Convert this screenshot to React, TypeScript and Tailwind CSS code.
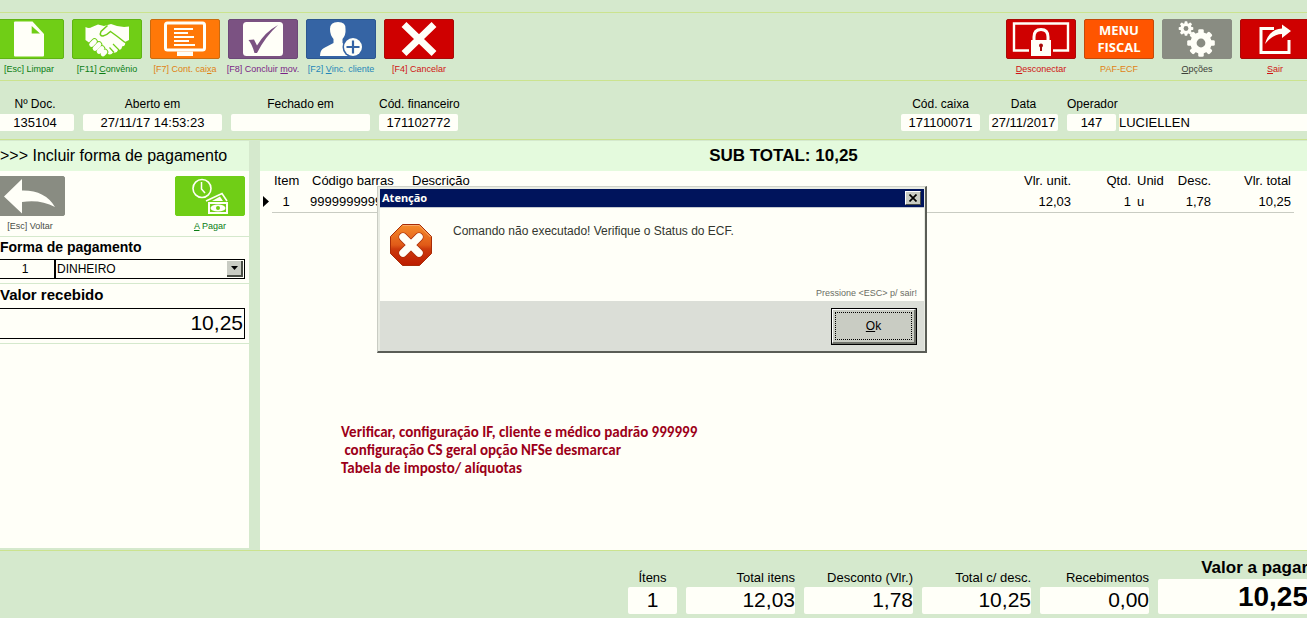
import React from "react";

function Tool({
  label,
  hotkey = "",
  rest = "",
  box,
  text,
  children,
}: {
  label: string;
  hotkey?: string;
  rest?: string;
  box: string;
  text: string;
  children: React.ReactNode;
}) {
  return (
    <button type="button" className="flex w-[70px] shrink-0 flex-col items-center gap-1">
      <span className={`flex h-10 w-[70px] items-center justify-center rounded-xs border ${box}`}>{children}</span>
      <span className={`text-[9px] leading-3 whitespace-nowrap ${text}`}>
        {label}
        <u>{hotkey}</u>
        {rest}
      </span>
    </button>
  );
}

function Icon({ children }: { children: React.ReactNode }) {
  return (
    <svg viewBox="0 0 70 40" className="h-10 w-[70px] shrink-0" fill="#fffff8" aria-hidden="true">
      {children}
    </svg>
  );
}

function Gear({ cx, cy, r, hole }: { cx: number; cy: number; r: number; hole: number }) {
  return (
    <g transform={`translate(${cx} ${cy})`}>
      {[0, 45, 90, 135].map((a) => (
        <rect key={a} x={-r * 0.2} y={-r} width={r * 0.4} height={r * 2} rx={r * 0.1} transform={`rotate(${a})`} />
      ))}
      <circle r={r * 0.77} />
      <circle r={hole} fill="#898c82" />
    </g>
  );
}

function Field({
  id,
  label,
  value,
  width,
  align = "text-center",
}: {
  id: string;
  label: string;
  value: string;
  width: string;
  align?: string;
}) {
  return (
    <div className={`flex shrink-0 flex-col gap-[3px] ${width}`}>
      <label htmlFor={id} className={`text-xs leading-[14px] whitespace-nowrap ${align}`}>
        {label}
      </label>
      <input id={id} readOnly value={value} className="h-[17px] w-full rounded-xs bg-[#fffff8] text-center text-[13px] outline-none" />
    </div>
  );
}

function Total({ id, label, value, width, center }: { id: string; label: string; value: string; width: string; center?: boolean }) {
  return (
    <div className={`flex shrink-0 flex-col ${width} ${center ? "text-center" : "text-right"}`}>
      <label htmlFor={id} className="text-[13px] leading-[18px] whitespace-nowrap">
        {label}
      </label>
      <input
        id={id}
        readOnly
        value={value}
        className={`h-[27px] w-full rounded-xs bg-[#fffff8] pb-0.5 text-[21px] outline-none ${center ? "text-center" : "text-right"}`}
      />
    </div>
  );
}

function Toolbar() {
  return (
    <nav className="mt-3 -mr-[3px] -ml-1.5 flex h-[69px] justify-between border-y border-[#cbe38f] pt-1.5">
      <div className="flex gap-2">
        <Tool label="[Esc] Limpar" box="border-[#5fb414] bg-[#70ce16]" text="text-[#0a7d14]">
          <Icon>
            <path d="M20 3.5Q20 2.5 21 2.5H38.5L50 15V36.5Q50 37.5 49 37.5H21Q20 37.5 20 36.5Z" />
            <path d="M37.7 7V14.5H46Z" fill="#70ce16" />
          </Icon>
        </Tool>
        <Tool label="[F11] " hotkey="C" rest="onvênio" box="border-[#5fb414] bg-[#70ce16]" text="text-[#0a7d14]">
          <Icon>
            <path d="M13.5 8Q17 10 20 8L26 5.500L32 7L39 5Q48 9 57 7.500V21L53 23Q54 27 50 27.500Q50 31 46 31Q45 34.500 41 33.500Q39 37 35 34.500L28 28L19 25L13.500 21Z" />
            <path d="M35.500 6.500L29 12.500Q27 17 31 17Q35 16 38.500 12.500Q45 17 53 23.500" fill="none" stroke="#70ce16" strokeWidth="1.500" />
            <path d="M41 25L47 31M37.500 28.500L42 33.500" stroke="#70ce16" strokeWidth="1.200" />
            <path d="M19.500 25.500L22.500 22.500M23 29.500L27 25.500M27 32.500L30 29.500M31 35L33 33" stroke="#70ce16" strokeWidth="6.600" strokeLinecap="round" />
            <path d="M19.500 25.500L22.500 22.500M23 29.500L27 25.500M27 32.500L30 29.500M31 35L33 33" stroke="#fffff8" strokeWidth="4.600" strokeLinecap="round" />
          </Icon>
        </Tool>
        <Tool label="[F7] Cont. cai" hotkey="x" rest="a" box="border-[#c96b10] bg-[#ff7808]" text="text-[#e08214]">
          <Icon>
            <rect x="15.5" y="4" width="39" height="27" rx="2" fill="none" stroke="#fffff8" strokeWidth="3" />
            <path d="M27 32.5H43V37H27Z" />
            <path d="M24 10H43M24 14H38M24 18H44M24 22H39M24 26H45" stroke="#fffff8" strokeWidth="2" />
          </Icon>
        </Tool>
        <Tool label="[F8] Concluir " hotkey="m" rest="ov." box="border-[#6c4878] bg-[#7b5282]" text="text-[#7a1f86]">
          <Icon>
            <rect x="15" y="3" width="40" height="34" rx="3.5" />
            <path d="M20.5 21L26 20.5L29 26.5Q37 13 50 6Q37 18 29 34H26.5Q24 25 20.5 21Z" fill="#7b5282" />
          </Icon>
        </Tool>
        <Tool label="[F2] " hotkey="V" rest="inc. cliente" box="border-[#2c5790] bg-[#3564a4]" text="text-[#2586b8]">
          <Icon>
            <path d="M24 10Q24 3 32 3Q40 3 39.500 10Q40 16 36.500 20V24Q39 27 44 28V37H14Q14 31 18 29L27.500 24V20Q24 16 24 10Z" />
            <circle cx="47" cy="28" r="10.5" fill="#3564a4" />
            <circle cx="47" cy="28" r="9" />
            <path d="M40.5 28H53.5M47 21.5V34.5" stroke="#3564a4" strokeWidth="2.2" />
          </Icon>
        </Tool>
        <Tool label="[F4] Cancelar" box="border-[#a80a08] bg-[#cf0000]" text="text-[#d01414]">
          <Icon>
            <path d="M20 5.5L50 34.5M50 5.5L20 34.5" stroke="#fffff8" strokeWidth="7" />
          </Icon>
        </Tool>
      </div>
      <div className="flex gap-2">
        <Tool label="" hotkey="D" rest="esconectar" box="border-[#a80a08] bg-[#cf0000]" text="text-[#d01414]">
          <Icon>
            <path d="M23 31.5H8V4.5H62V31.5H47" fill="none" stroke="#fffff8" strokeWidth="2.4" />
            <path d="M28 22V18Q28 10.5 35 10.5T42 18V22" fill="none" stroke="#fffff8" strokeWidth="3" />
            <rect x="25" y="21" width="20" height="16" />
            <circle cx="35" cy="26.5" r="2" fill="#a80a08" />
            <path d="M34 27H36V32H34Z" fill="#a80a08" />
          </Icon>
        </Tool>
        <Tool label="PAF-ECF" box="border-[#c24a0c] bg-[#ff5500]" text="text-[#e08214]">
          <span className="font-['Open_Sans',sans-serif] text-[13px] leading-[17px] font-bold text-[#fffff8]">
            MENU
            <br />
            FISCAL
          </span>
        </Tool>
        <Tool label="" hotkey="O" rest="pções" box="border-[#898c82] bg-[#898c82]" text="text-[#3c4038]">
          <Icon>
            <Gear cx={24} cy={9.5} r={7.3} hole={2.4} />
            <Gear cx={39} cy={24} r={13.8} hole={4.4} />
          </Icon>
        </Tool>
        <Tool label="" hotkey="S" rest="air" box="border-[#a80a08] bg-[#cf0000]" text="text-[#d01414]">
          <Icon>
            <path d="M34 9.500H21V33.500H49V21" fill="none" stroke="#fffff8" strokeWidth="3" />
            <path d="M25 25Q29 10 42 9.500V5.500L51 12L42 19V15Q33 15 25 25Z" />
          </Icon>
        </Tool>
      </div>
    </nav>
  );
}

function HeaderFields() {
  return (
    <div className="flex h-[59px] justify-between overflow-hidden border-b border-[#cbe38f] pt-4">
      <div className="-ml-1 flex gap-[9px]">
        <Field id="doc" label="Nº Doc." value="135104" width="w-[78px]" />
        <Field id="aberto" label="Aberto em" value="27/11/17 14:53:23" width="w-[139px]" />
        <Field id="fechado" label="Fechado em" value="" width="w-[139px]" />
        <Field id="financeiro" label="Cód. financeiro" value="171102772" width="w-[79px]" align="text-left" />
      </div>
      <div className="flex gap-[9px]">
        <Field id="caixa" label="Cód. caixa" value="171100071" width="w-[79px]" />
        <Field id="data" label="Data" value="27/11/2017" width="w-[69px]" />
        <div className="flex items-start gap-[3px]">
          <Field id="operador" label="Operador" value="147" width="w-[49px]" align="text-left" />
          <input
            aria-label="Nome do operador"
            readOnly
            value="LUCIELLEN"
            className="mt-[17px] h-[17px] w-[188px] bg-[#fffff8] text-[13px] outline-none"
          />
        </div>
      </div>
    </div>
  );
}

function PaymentPanel() {
  return (
    <aside className="mb-0.5 flex w-[249px] shrink-0 flex-col bg-[#fffff8]">
      <h2 className="h-[30px] bg-[#e4fadd] text-base leading-[30px] whitespace-nowrap">&gt;&gt;&gt; Incluir forma de pagamento</h2>
      <div className="-ml-[5px] flex h-[66px] justify-between border-b border-[#d5e9cd] pt-[5px] pr-1">
        <Tool label="[Esc] Voltar" box="border-[#898c82] bg-[#898c82]" text="text-[#4a4e46]">
          <Icon>
            <path d="M9 20.500L27 3V14.500Q50 14 60 31Q45 23 27 26V37.500Z" />
          </Icon>
        </Tool>
        <Tool label="" hotkey="A" rest=" Pagar" box="border-[#70ce16] bg-[#70ce16]" text="text-[#0a7d14]">
          <Icon>
            <circle cx="27" cy="12.500" r="9" fill="none" stroke="#fffff8" strokeWidth="1.600" />
            <path d="M26.500 6V13L30 17" fill="none" stroke="#fffff8" strokeWidth="1.500" />
            <path d="M31 25L47 17.500L52 25" fill="none" stroke="#fffff8" strokeWidth="1.600" />
            <path d="M37 25L45 20.500L48 25Z" />
            <rect x="33" y="26" width="20" height="12" />
            <rect x="35" y="28" width="16" height="8" fill="#70ce16" />
            <ellipse cx="43" cy="32" rx="7.500" ry="3.600" />
            <circle cx="43" cy="32" r="2" fill="#70ce16" />
          </Icon>
        </Tool>
      </div>
      <div className="h-[47px] border-b border-[#d5e9cd] pr-1">
        <label htmlFor="forma" className="block h-[22px] text-sm leading-[20px] font-bold">
          Forma de pagamento
        </label>
        <div className="flex h-5 border border-l-0 border-black">
          <input aria-label="Código" readOnly value="1" className="w-[56px] shrink-0 border-r-2 border-black pr-1 text-center text-xs outline-none" />
          <div className="relative min-w-0 flex-1">
            <select id="forma" className="block h-[17px] w-full appearance-none pl-px text-xs outline-none">
              <option>DINHEIRO</option>
            </select>
            <span className="pointer-events-none absolute top-px right-px flex h-4 w-4 items-center justify-center border-r-2 border-b-2 border-[#4a4e46] bg-[#c9ccc3]">
              <svg viewBox="0 0 7 4" className="h-1 w-[7px]" aria-hidden="true">
                <path d="M0 0H7L3.500 4Z" />
              </svg>
            </span>
          </div>
        </div>
      </div>
      <div className="h-[60px] border-b border-[#d5e9cd] pr-1">
        <label htmlFor="recebido" className="block h-6 text-[15px] leading-[22px] font-bold">
          Valor recebido
        </label>
        <input
          id="recebido"
          defaultValue="10,25"
          className="h-[31px] w-full border border-l-0 border-black pr-px pb-0.5 text-right text-[21px] outline-none"
        />
      </div>
    </aside>
  );
}

function ItemsPanel() {
  return (
    <main className="min-w-0 flex-1 bg-[#fffff8]">
      <h1 className="h-[30px] bg-[#e4fadd] text-center text-[17px] leading-[30px] font-bold">SUB TOTAL: 10,25</h1>
      <div className="pr-[13px]">
        <table className="w-full table-fixed text-[13px]">
          <colgroup>
            <col className="w-3" />
            <col className="w-8" />
            <col className="w-[104px]" />
            <col />
            <col className="w-[100px]" />
            <col className="w-[60px]" />
            <col className="w-10" />
            <col className="w-10" />
            <col className="w-[81px]" />
          </colgroup>
          <thead>
            <tr className="h-5 text-left whitespace-nowrap [&>th]:font-normal">
              <td />
              <th className="pl-0.5">Item</th>
              <th className="pl-2">Código barras</th>
              <th className="pl-1">Descrição</th>
              <th className="pr-0.5 text-right">Vlr. unit.</th>
              <th className="pr-0.5 text-right">Qtd.</th>
              <th className="pl-1">Unid</th>
              <th className="pr-0.5 text-right">Desc.</th>
              <th className="pr-[3px] text-right">Vlr. total</th>
            </tr>
          </thead>
          <tbody>
            <tr className="h-[21px] [&>td+td]:border-b [&>td+td]:border-[#c9ccc3]">
              <td className="pl-[3px]">
                <svg viewBox="0 0 6 11" className="h-[11px] w-1.5" aria-hidden="true">
                  <path d="M0 0L6 5.500L0 11Z" />
                </svg>
              </td>
              <td className="pr-1 text-center">1</td>
              <td className="overflow-hidden pl-1.5">9999999999</td>
              <td />
              <td className="pr-0.5 text-right">12,03</td>
              <td className="pr-0.5 text-right">1</td>
              <td className="pl-1">u</td>
              <td className="pr-0.5 text-right">1,78</td>
              <td className="pr-[3px] text-right">10,25</td>
            </tr>
          </tbody>
        </table>
      </div>
      <p className="mt-[210px] ml-[81px] font-['Carlito','Lato',sans-serif] text-[15px] leading-[18px] font-bold whitespace-pre text-[#9c0018]">
        {"Verificar, configuração IF, cliente e médico padrão 999999\n configuração CS geral opção NFSe desmarcar\nTabela de imposto/ alíquotas"}
      </p>
    </main>
  );
}

function Footer() {
  return (
    <footer className="flex h-[68px] justify-end gap-[9px] overflow-hidden border-t border-[#cbe38f]">
      <div className="flex gap-[9px] pt-[18px]">
        <Total id="itens" label="Ítens" value="1" width="w-[49px]" center />
        <Total id="total" label="Total itens" value="12,03" width="w-[109px]" />
        <Total id="desconto" label="Desconto (Vlr.)" value="1,78" width="w-[109px]" />
        <Total id="liquido" label="Total c/ desc." value="10,25" width="w-[109px]" />
        <Total id="recebimentos" label="Recebimentos" value="0,00" width="w-[109px]" />
      </div>
      <div className="-mr-px flex w-[150px] shrink-0 flex-col pt-[6px] text-right font-bold">
        <label htmlFor="pagar" className="text-[17px] leading-[22px] whitespace-nowrap">
          Valor a pagar
        </label>
        <input id="pagar" readOnly value="10,25" className="h-[35px] w-full rounded-xs bg-[#fffff8] text-right text-[28px] outline-none" />
      </div>
    </footer>
  );
}

function ErrorDialog() {
  return (
    <div className="absolute inset-x-0 top-[186px] flex justify-center pr-[3px]">
      <section
        role="dialog"
        aria-labelledby="dialog-title"
        className="w-[550px] border-t border-r-2 border-b-2 border-l border-t-[#d0d3ca] border-r-[#5a5d56] border-b-[#5a5d56] border-l-[#c9ccc3] bg-[#fffff8]"
      >
        <div className="border-t-2 border-r border-l-2 border-[#e8ebe2]">
          <header className="flex h-[18px] items-center justify-between bg-[#00145c] pr-[3px] pl-0.5">
            <h2 id="dialog-title" className="font-['Noto_Sans',sans-serif] text-[11px] leading-[18px] font-bold text-[#fffff8]">
              Atenção
            </h2>
            <button
              type="button"
              aria-label="Fechar"
              className="flex h-[14px] w-4 items-center justify-center border border-t-white border-r-[#4a4e46] border-b-[#4a4e46] border-l-white bg-[#c9ccc3]"
            >
              <svg viewBox="0 0 8 8" className="h-2 w-2" aria-hidden="true">
                <path d="M.5.5L7.500 7.500M7.500.5L.5 7.500" stroke="#000" strokeWidth="1.700" />
              </svg>
            </button>
          </header>
          <div className="flex h-[94px] border-t border-[#c5cad0] pt-[15px] pl-[9px]">
            <svg viewBox="0 0 44 44" className="h-11 w-11 shrink-0" aria-hidden="true">
              <defs>
                <linearGradient id="stop" x1="0" y1="0" x2="0" y2="1">
                  <stop offset="0" stopColor="#f68c2c" />
                  <stop offset=".5" stopColor="#e05a18" />
                  <stop offset=".6" stopColor="#cc3a0c" />
                  <stop offset="1" stopColor="#bc1c00" />
                </linearGradient>
              </defs>
              <path d="M13.500 1.500H30.500L42.500 13.500V30.500L30.500 42.500H13.500L1.500 30.500V13.500Z" fill="url(#stop)" stroke="#a82c08" />
              <path d="M14 2.500H30L41.500 14" fill="none" stroke="#f8a868" />
              <path d="M14 14L30 30M30 14L14 30" stroke="#a82c08" strokeWidth="9" strokeLinecap="round" />
              <path d="M14 14L30 30M30 14L14 30" stroke="#fffff8" strokeWidth="7.500" strokeLinecap="round" />
            </svg>
            <div className="flex min-w-0 flex-1 flex-col justify-between pr-[7px] pb-px pl-5 text-[#33362f]">
              <p className="text-xs leading-4">Comando não executado! Verifique o Status do ECF.</p>
              <p className="text-right text-[9px] leading-[14px] text-[#6a6d64]">Pressione &lt;ESC&gt; p/ sair!</p>
            </div>
          </div>
          <div className="flex h-[50px] items-center justify-end bg-[#dbded7] pr-[7px]">
            <button type="button" className="h-[37px] w-[86px] border border-black bg-[#c9ccc3] text-xs">
              <span className="flex h-full items-center justify-center border-t border-r-2 border-b-2 border-l border-t-white border-r-[#71746c] border-b-[#71746c] border-l-white p-0.5">
                <span className="flex h-full w-full items-center justify-center border border-dotted border-black">
                  <span>
                    <u>O</u>k
                  </span>
                </span>
              </span>
            </button>
          </div>
        </div>
      </section>
    </div>
  );
}

export default function App() {
  return (
    <div className="relative flex min-h-screen flex-col overflow-hidden bg-[#d5e9cd] font-['Liberation_Sans',Arial,sans-serif] text-black">
      <Toolbar />
      <HeaderFields />
      <div className="flex flex-1 gap-[11px] pt-px">
        <PaymentPanel />
        <ItemsPanel />
      </div>
      <Footer />
      <ErrorDialog />
    </div>
  );
}
